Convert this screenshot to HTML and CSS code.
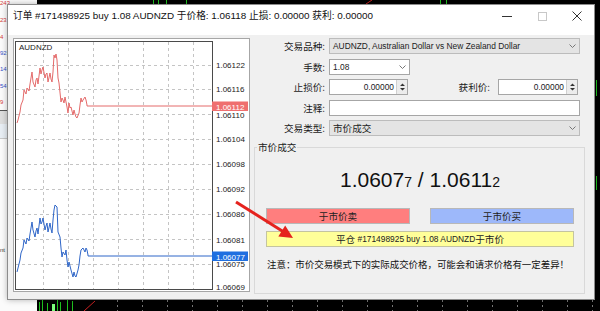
FILE: index.html
```html
<!DOCTYPE html>
<html lang="zh">
<head>
<meta charset="utf-8">
<title>订单</title>
<link rel="stylesheet" href="styles.css">
</head>
<body>
<div class="desk">
  <svg class="bg" width="600" height="311" viewBox="0 0 600 311">
    <rect x="0" y="0" width="600" height="311" fill="#000"/>
    <rect x="0" y="0" width="37" height="311" fill="#fbfbfb"/>
    <g font-family="Liberation Sans, sans-serif" font-size="6" text-anchor="start">
      <text x="0" y="5" fill="#d43c3c">243</text>
      <text x="0" y="22" fill="#d43c3c">23</text>
      <text x="0" y="39" fill="#d43c3c">4</text>
      <text x="0" y="55" fill="#3552c8">92</text>
      <text x="0" y="71" fill="#3552c8">14</text>
      <text x="0" y="88" fill="#3552c8">54</text>
      <text x="0" y="104" fill="#d43c3c">9</text>
      <text x="0" y="252" fill="#333">nt</text>
    </g>
    <rect x="0" y="110" width="37" height="1" fill="#555"/>
    <rect x="0" y="111" width="37" height="13" fill="#dedede"/>
    <rect x="0" y="124" width="37" height="14" fill="#e8eef4"/>
    <rect x="0" y="138" width="37" height="1" fill="#c8c8c8"/>
    <g stroke="#1fc21f" stroke-width="1">
      <line x1="153.5" y1="0" x2="153.5" y2="4"/>
      <line x1="158.5" y1="0" x2="158.5" y2="4"/>
      <line x1="166.5" y1="0" x2="166.5" y2="4"/>
      <line x1="186.5" y1="0" x2="186.5" y2="4"/>
      <line x1="440.5" y1="0" x2="440.5" y2="4"/>
      <line x1="446.5" y1="0" x2="446.5" y2="4"/>
      <line x1="596.5" y1="80" x2="596.5" y2="96"/>
      <line x1="596.5" y1="176" x2="596.5" y2="190"/>
      <line x1="39.5" y1="302" x2="39.5" y2="311"/>
      <line x1="42.5" y1="300" x2="42.5" y2="311"/>
      <line x1="47.5" y1="303" x2="47.5" y2="311"/>
      <line x1="57.5" y1="300" x2="57.5" y2="311"/>
      <line x1="60.5" y1="302" x2="60.5" y2="311"/>
      <line x1="67.5" y1="300" x2="67.5" y2="311"/>
      <line x1="72.5" y1="301" x2="72.5" y2="311"/>
    </g>
    <rect x="52" y="304" width="3" height="7" fill="#7cff7c"/>
    <line x1="84" y1="311" x2="95" y2="301" stroke="#c22" stroke-width="1"/>
    <line x1="366" y1="4" x2="372" y2="0" stroke="#c22" stroke-width="1"/>
    <g stroke="#777" stroke-dasharray="2 3">
      <line x1="117.5" y1="300" x2="117.5" y2="311"/>
      <line x1="142.5" y1="300" x2="142.5" y2="311"/>
      <line x1="167.5" y1="300" x2="167.5" y2="311"/>
      <line x1="192.5" y1="300" x2="192.5" y2="311"/>
      <line x1="217.5" y1="300" x2="217.5" y2="311"/>
      <line x1="242.5" y1="300" x2="242.5" y2="311"/>
      <line x1="267.5" y1="300" x2="267.5" y2="311"/>
      <line x1="292.5" y1="300" x2="292.5" y2="311"/>
      <line x1="317.5" y1="300" x2="317.5" y2="311"/>
      <line x1="342.5" y1="300" x2="342.5" y2="311"/>
      <line x1="367.5" y1="300" x2="367.5" y2="311"/>
      <line x1="392.5" y1="300" x2="392.5" y2="311"/>
      <line x1="417.5" y1="300" x2="417.5" y2="311"/>
      <line x1="442.5" y1="300" x2="442.5" y2="311"/>
      <line x1="467.5" y1="300" x2="467.5" y2="311"/>
      <line x1="492.5" y1="300" x2="492.5" y2="311"/>
      <line x1="517.5" y1="300" x2="517.5" y2="311"/>
      <line x1="542.5" y1="300" x2="542.5" y2="311"/>
      <line x1="567.5" y1="300" x2="567.5" y2="311"/>
      <line x1="592.5" y1="300" x2="592.5" y2="311"/>
    </g>
  </svg>

  <div class="dlg">
    <div class="titlebar">
      <span class="title"><span class="zh">订单</span> #171498925 buy 1.08 AUDNZD <span class="zh">于价格</span>: 1.06118 <span class="zh">止损</span>: 0.00000 <span class="zh">获利</span>: 0.00000</span>
      <div class="ctls">
        <div class="ctl"><svg width="10" height="10" viewBox="0 0 10 10"><line x1="0" y1="5.5" x2="10" y2="5.5" stroke="#333"/></svg></div>
        <div class="ctl"><svg width="10" height="10" viewBox="0 0 10 10"><rect x="1.5" y="1.5" width="8" height="8" fill="none" stroke="#c8c8c8"/></svg></div>
        <div class="ctl"><svg width="10" height="10" viewBox="0 0 10 10"><path d="M0.5 0.5L9.5 9.5M9.5 0.5L0.5 9.5" stroke="#333"/></svg></div>
      </div>
    </div>

    <div class="body">
      <div class="chart">
        <svg width="237" height="254" viewBox="13 38 237 254">
          <rect x="13.5" y="38.5" width="236" height="253" fill="#fff" stroke="#a6a6a6"/>
          <g stroke="#c4c4c4" stroke-dasharray="3 3">
            <line x1="43.5" y1="42" x2="43.5" y2="289"/>
            <line x1="68.5" y1="42" x2="68.5" y2="289"/>
            <line x1="93.5" y1="42" x2="93.5" y2="289"/>
            <line x1="118.5" y1="42" x2="118.5" y2="289"/>
            <line x1="143.5" y1="42" x2="143.5" y2="289"/>
            <line x1="168.5" y1="42" x2="168.5" y2="289"/>
            <line x1="193.5" y1="42" x2="193.5" y2="289"/>
            <line x1="16" y1="65.5" x2="212" y2="65.5"/>
            <line x1="16" y1="89.5" x2="212" y2="89.5"/>
            <line x1="16" y1="114.5" x2="212" y2="114.5"/>
            <line x1="16" y1="139.5" x2="212" y2="139.5"/>
            <line x1="16" y1="164.5" x2="212" y2="164.5"/>
            <line x1="16" y1="189.5" x2="212" y2="189.5"/>
            <line x1="16" y1="214.5" x2="212" y2="214.5"/>
            <line x1="16" y1="239.5" x2="212" y2="239.5"/>
            <line x1="16" y1="264.5" x2="212" y2="264.5"/>
          </g>
          <rect x="15.5" y="41.5" width="197" height="248" fill="none" stroke="#4a4a4a"/>
          <text x="19" y="50" class="ax">AUDNZD</text>
          <polyline fill="none" stroke="#e46a6a" stroke-width="1" points="17,123 18,120 20,112 21,105 23,100 24,90 26,94 27,88 29,91 30,84 31,78 32,72 33,82 35,87 36,80 37,78 38,84 40,68 41,74 42,70 43,67 45,78 46,74 47,73 48,82 50,73 51,79 52,82 53,72 54,55 55,58 56,54 57,60 58,78 59,83 61,102 62,98 63,100 64,103 65,97 67,107 68,113 69,103 70,108 71,107 73,115 74,110 75,114 76,117 77,118 79,113 80,105 81,98 82,102 83,100 85,97 86,100 87,105 87,106 212,106"/>
          <polyline fill="none" stroke="#2f66c8" stroke-width="1" points="17,272 18,268 20,260 21,253 23,248 24,240 26,244 27,238 29,241 30,234 32,222 33,230 35,237 36,231 37,228 38,234 40,218 41,224 42,222 43,218 45,230 46,226 47,223 48,232 50,223 51,229 52,233 53,220 54,210 55,205 56,206 57,207 58,232 60,237 61,248 62,257 63,252 65,255 66,250 67,260 68,267 69,262 70,266 71,270 73,277 74,272 75,276 76,277 78,270 79,265 80,256 81,250 83,248 85,252 86,248 87,250 88,255 88,256 212,256"/>
          <g class="ax">
            <text x="216" y="68">1.06122</text>
            <text x="216" y="92">1.06116</text>
            <text x="216" y="118">1.06110</text>
            <text x="216" y="142">1.06104</text>
            <text x="216" y="167">1.06098</text>
            <text x="216" y="192">1.06092</text>
            <text x="216" y="217">1.06086</text>
            <text x="216" y="243">1.06081</text>
            <text x="216" y="267">1.06075</text>
            <text x="216" y="290">1.06069</text>
          </g>
          <rect x="212" y="101.5" width="36" height="9.5" fill="#ef6f6f"/>
          <text x="216" y="109.5" class="ax wt">1.06112</text>
          <rect x="212" y="251.5" width="36" height="9.5" fill="#1f6fe0"/>
          <text x="216" y="259.5" class="ax wt">1.06077</text>
        </svg>
      </div>

      <div class="form">
        <div class="grid">
          <div class="lbl"><span class="zh">交易品种:</span></div>
          <div class="sel"><span>AUDNZD, Australian Dollar vs New Zealand Dollar</span><svg class="chev" width="7" height="4" viewBox="0 0 7 4"><polyline points="0.5,0.5 3.5,3.5 6.5,0.5" fill="none" stroke="#777"/></svg></div>

          <div class="lbl"><span class="zh">手数:</span></div>
          <div class="sel lots"><span>1.08</span><svg class="chev" width="7" height="4" viewBox="0 0 7 4"><polyline points="0.5,0.5 3.5,3.5 6.5,0.5" fill="none" stroke="#777"/></svg></div>

          <div class="lbl"><span class="zh">止损价:</span></div>
          <div class="sltp">
            <div class="num"><span class="v">0.00000</span><span class="spin"><svg width="9" height="12" viewBox="0 0 9 12"><path d="M2 5L4.5 2.5L7 5Z M2 7L4.5 9.5L7 7Z" fill="#333"/></svg></span></div>
            <span class="tplbl zh">获利价:</span>
            <div class="num tp"><span class="v">0.00000</span><span class="spin"><svg width="9" height="12" viewBox="0 0 9 12"><path d="M2 5L4.5 2.5L7 5Z M2 7L4.5 9.5L7 7Z" fill="#333"/></svg></span></div>
          </div>

          <div class="lbl"><span class="zh">注释:</span></div>
          <div class="inp"></div>

          <div class="lbl"><span class="zh">交易类型:</span></div>
          <div class="sel"><span class="zh">市价成交</span><svg class="chev" width="7" height="4" viewBox="0 0 7 4"><polyline points="0.5,0.5 3.5,3.5 6.5,0.5" fill="none" stroke="#777"/></svg></div>
        </div>

        <fieldset class="grp">
          <legend class="zh">市价成交</legend>
          <div class="price">1.0607<small>7</small> / 1.0611<small>2</small></div>
          <div class="btns">
            <div class="btn sell"><span class="zh">于市价卖</span></div>
            <div class="btn buy"><span class="zh">于市价买</span></div>
          </div>
          <div class="btn close"><span class="zh">平仓</span>&nbsp;#171498925 buy 1.08 AUDNZD<span class="zh">于市价</span></div>
          <p class="note zh">注意：市价交易模式下的实际成交价格，可能会和请求价格有一定差异！</p>
        </fieldset>
      </div>
    </div>
  </div>

  <svg class="arrow" width="600" height="311" viewBox="0 0 600 311">
    <line x1="236" y1="202" x2="283" y2="231.5" stroke="#e5231e" stroke-width="3"/>
    <polygon points="293,238 285.2,225.5 278.3,236.5" fill="#e5231e"/>
  </svg>
</div>
</body>
</html>
```

FILE: styles.css
```css
* {
  box-sizing: border-box;
  margin: 0;
  padding: 0;
}

html, body {
  width: 600px;
  height: 311px;
  overflow: hidden;
}

body {
  background: #000;
  font-family: "Liberation Sans", "Noto Sans CJK SC", sans-serif;
  font-size: 8.4px;
  color: #1a1a1a;
}

.zh {
  font-family: "Noto Sans CJK SC", sans-serif;
  font-size: 9.6px;
}

.desk {
  position: relative;
  width: 600px;
  height: 311px;
}

.bg {
  position: absolute;
  left: 0;
  top: 0;
  display: block;
}

.arrow {
  position: absolute;
  left: 0;
  top: 0;
  display: block;
  pointer-events: none;
}

.dlg {
  position: absolute;
  left: 7px;
  top: 4px;
  width: 588px;
  height: 296px;
  border: 1px solid #8c8c8c;
  background: #f0f0f0;
  display: flex;
  flex-direction: column;
  box-shadow: 0 0 6px rgba(0, 0, 0, 0.28);
}

.titlebar {
  height: 30px;
  flex: none;
  background: #fff;
  display: flex;
  align-items: flex-start;
  padding-left: 5px;
}

.title {
  line-height: 21px;
  font-size: 9.9px;
  color: #111;
  white-space: nowrap;
}

.title .zh {
  font-size: 9.7px;
}

.ctls {
  margin-left: auto;
  display: flex;
}

.ctl {
  width: 35px;
  height: 21px;
  display: flex;
  align-items: center;
  justify-content: center;
}

.ctl svg {
  display: block;
}

.body {
  flex: 1;
  display: flex;
  gap: 4px;
  padding: 3px 0 0 5px;
}

.chart {
  width: 237px;
  height: 254px;
  flex: none;
}

.chart svg {
  display: block;
}

.ax {
  font-family: "Liberation Sans", sans-serif;
  font-size: 8px;
  fill: #222;
}

.ax.wt {
  fill: #fff;
}

.form {
  width: 331px;
  flex: none;
  display: flex;
  flex-direction: column;
}

.grid {
  display: grid;
  grid-template-columns: 70px 251px;
  grid-auto-rows: 16px;
  column-gap: 4px;
  row-gap: 4.5px;
  margin-left: 1px;
}

.lbl {
  display: flex;
  align-items: center;
  justify-content: flex-end;
  white-space: nowrap;
  color: #1a1a1a;
}

.sel {
  border: 1px solid #bcbcbc;
  background: #e4e4e4;
  display: flex;
  align-items: center;
  justify-content: space-between;
  padding-left: 3px;
  color: #222;
  white-space: nowrap;
}

.sel .chev {
  margin-right: 3px;
  display: block;
}

.sel.lots {
  width: 81px;
  background: #fff;
  border-color: #a6a6a6;
}

.inp {
  border: 1px solid #a6a6a6;
  background: #fff;
}

.sltp {
  display: flex;
  align-items: center;
  padding-right: 2px;
}

.num {
  width: 79px;
  height: 16px;
  border: 1px solid #a6a6a6;
  background: #fff;
  display: flex;
  align-items: center;
  justify-content: flex-end;
}

.num.tp {
  width: 80px;
}

.num .v {
  padding-right: 2px;
}

.spin {
  width: 11px;
  height: 14px;
  background: #ececec;
  border-left: 1px solid #d0d0d0;
  display: flex;
  align-items: center;
  justify-content: center;
}

.spin svg {
  display: block;
}

.tplbl {
  margin-left: auto;
  margin-right: 8px;
  white-space: nowrap;
}

.grp {
  margin-top: 6px;
  border: 1px solid #d9d9d9;
  padding: 0 10px 23px 11px;
  min-width: 0;
}

.grp legend {
  margin-left: -9px;
  padding: 0 1px;
  line-height: 11px;
  color: #1a1a1a;
}

.price {
  margin-top: 15px;
  font-family: "Liberation Sans", sans-serif;
  font-size: 21px;
  line-height: 24px;
  text-align: center;
  color: #111;
}

.price small {
  font-size: 14px;
}

.btns {
  display: grid;
  grid-template-columns: 1fr 1fr;
  column-gap: 20px;
  margin-top: 14px;
}

.btn {
  height: 16px;
  border: 1px solid #b8b8b8;
  display: flex;
  align-items: center;
  justify-content: center;
  color: #222;
  white-space: nowrap;
}

.sell {
  background: #ff7e7e;
}

.buy {
  background: #9db8fa;
}

.close {
  margin-top: 7px;
  background: #ffff99;
  border-color: #c4c4a0;
}

.note {
  margin-top: 11px;
  line-height: 12px;
  padding-left: 1px;
  color: #111;
  white-space: nowrap;
  font-size: 9.45px;
}
```
